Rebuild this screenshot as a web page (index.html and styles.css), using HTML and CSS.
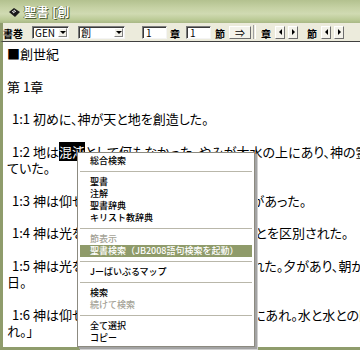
FILE: index.html
```html
<!DOCTYPE html>
<html lang="ja">
<head>
<meta charset="utf-8">
<link rel="stylesheet" href="styles.css">
</head>
<body>
<div class="window">
  <div class="titlebar">
    <svg class="appicon" width="13" height="11" viewBox="0 0 13 11">
      <path d="M1 5 L6 1 L12 5 L7 10 Z" fill="#1a1a1a"/>
      <path d="M4 5 L7 3 M5 6 L8 4" stroke="#e8e8e8" stroke-width="1"/>
    </svg>
    <span class="title">聖書 [創</span>
  </div>
  <div class="toolbar">
    <span class="lbl lbl-book">書巻</span>
    <div class="combo combo-gen"><span class="combo-text">GEN</span><span class="dd"><i class="tri-down"></i></span></div>
    <div class="combo combo-book"><span class="combo-text">創</span><span class="dd"><i class="tri-down"></i></span></div>
    <div class="field field-ch">1</div>
    <span class="lbl lbl-ch">章</span>
    <div class="field field-vs">1</div>
    <span class="lbl lbl-vs">節</span>
    <div class="btn btn-go">⇒</div>
    <span class="tsep"></span>
    <span class="lbl lbl-ch2">章</span>
    <div class="btn arr arr-first"><i class="tri-left"></i></div>
    <div class="btn arr"><i class="tri-right"></i></div>
    <span class="lbl lbl-vs2">節</span>
    <div class="btn arr arr-first"><i class="tri-left"></i></div>
    <div class="btn arr"><i class="tri-right"></i></div>
  </div>
  <div class="content">
    <div class="para"><div class="line">■創世紀</div></div>
    <div class="para"><div class="line">第 1章</div></div>
    <div class="para"><div class="line verse">1:1 初めに、神が天と地を創造した。</div></div>
    <div class="para">
      <div class="line verse">1:2 地は<span class="hl">混沌</span>として何もなかった。やみが大水の上にあり、神の霊が水の上を動い</div>
      <div class="line">ていた。</div>
    </div>
    <div class="para"><div class="line verse">1:3 神は仰せられた。「光よ、あれ。」すると光があった。</div></div>
    <div class="para"><div class="line verse">1:4 神は光を見て、良しとした。神は光とやみとを区別された。</div></div>
    <div class="para">
      <div class="line verse">1:5 神は光を昼と呼び、やみを夜と名づけられた。夕があり、朝があった。第一</div>
      <div class="line">日。</div>
    </div>
    <div class="para">
      <div class="line verse">1:6 神は仰せられた。「大空よ。水のまんなかにあれ。水と水との間に区別があ</div>
      <div class="line">れ。」</div>
    </div>
  </div>
  <div class="menu">
    <div class="mi">総合検索</div>
    <div class="msep"></div>
    <div class="mi">聖書</div>
    <div class="mi">注解</div>
    <div class="mi">聖書辞典</div>
    <div class="mi">キリスト教辞典</div>
    <div class="msep"></div>
    <div class="mi dis">節表示</div>
    <div class="mi sel">聖書検索（JB2008語句検索を起動）</div>
    <div class="msep"></div>
    <div class="mi">Jーばいぶるマップ</div>
    <div class="msep"></div>
    <div class="mi">検索</div>
    <div class="mi dis">続けて検索</div>
    <div class="msep"></div>
    <div class="mi">全て選択</div>
    <div class="mi">コピー</div>
  </div>
</div>
</body>
</html>
```
FILE: styles.css
```css
html, body {
  margin: 0;
  padding: 0;
  width: 360px;
  height: 350px;
  overflow: hidden;
  background: #ffffff;
}

.window {
  position: relative;
  width: 360px;
  height: 350px;
  display: flex;
  flex-direction: column;
  overflow: hidden;
  font-family: "Noto Sans CJK JP", "Noto Sans", sans-serif;
}

.titlebar {
  height: 23px;
  flex: none;
  display: flex;
  align-items: center;
  padding-left: 8px;
  background: linear-gradient(#b3c18f 0%, #c6d2a5 35%, #d0dab2 60%, #bccb97 85%, #a9b886 100%);
}

.appicon {
  margin-top: 1px;
}

.title {
  margin-left: 3px;
  font-size: 12px;
  font-weight: bold;
  color: #ffffff;
  text-shadow: 1px 1px 0 #4e5c33, -1px 0 0 #6f7d4f;
  letter-spacing: 0.5px;
}

.toolbar {
  height: 18px;
  flex: none;
  display: flex;
  align-items: center;
  background: #ecebdc;
  border-left: 3px solid #8f9c6c;
  font-size: 10px;
  color: #000;
}

.lbl {
  font-size: 10px;
  font-weight: bold;
  line-height: 12px;
  margin-top: 3px;
}

.lbl-book { margin-left: 0; }

.combo {
  height: 13px;
  box-sizing: border-box;
  background: #fff;
  border-style: solid;
  border-width: 1px;
  border-color: #7b7b7b #f4f4f4 #f4f4f4 #7b7b7b;
  box-shadow: inset 1px 1px 0 #3a3a3a;
  display: flex;
  align-items: center;
  justify-content: space-between;
  font-size: 10px;
}

.combo-gen { width: 37px; margin-left: 9px; }
.combo-book { width: 47px; margin-left: 9px; }

.combo-text {
  padding-left: 2px;
  line-height: 11px;
}

.dd {
  width: 9px;
  height: 9px;
  margin-right: 1px;
  background: #f2f1ea;
  border: 1px solid;
  border-color: #fff #808080 #808080 #fff;
  display: flex;
  align-items: center;
  justify-content: center;
  box-sizing: border-box;
}

.tri-down {
  width: 0;
  height: 0;
  border-left: 3px solid transparent;
  border-right: 3px solid transparent;
  border-top: 3px solid #000;
}

.field {
  width: 25px;
  height: 13px;
  box-sizing: border-box;
  background: #fff;
  border-style: solid;
  border-width: 1px;
  border-color: #7b7b7b #f4f4f4 #f4f4f4 #7b7b7b;
  box-shadow: inset 1px 1px 0 #3a3a3a;
  font-size: 10px;
  line-height: 11px;
  padding-left: 3px;
}

.field-ch { margin-left: 17px; }
.lbl-ch { margin-left: 3px; }
.field-vs { margin-left: 6px; }
.lbl-vs { margin-left: 4px; }

.btn {
  height: 13px;
  box-sizing: border-box;
  background: #f3f2ea;
  border: 1px solid;
  border-color: #ffffff #6e6e6e #6e6e6e #ffffff;
  display: flex;
  align-items: center;
  justify-content: center;
}

.btn-go {
  width: 22px;
  margin-left: 4px;
  font-size: 10px;
  line-height: 11px;
}

.tsep {
  width: 1px;
  height: 14px;
  margin-left: 2px;
  border-left: 1px solid #a0a0a0;
  border-right: 1px solid #fff;
}

.lbl-ch2 { margin-left: 5px; }
.lbl-vs2 { margin-left: 9px; }

.arr {
  width: 10px;
  margin-left: 3px;
}

.arr-first { margin-left: 4px; }

.tri-left {
  width: 0;
  height: 0;
  border-top: 3px solid transparent;
  border-bottom: 3px solid transparent;
  border-right: 3px solid #000;
}

.tri-right {
  width: 0;
  height: 0;
  border-top: 3px solid transparent;
  border-bottom: 3px solid transparent;
  border-left: 3px solid #000;
}

.content {
  flex: 1;
  min-height: 0;
  overflow: hidden;
  background: #fff;
  border-left: 3px solid #8f9c6c;
  border-top: 1px solid #404040;
  border-bottom: 3px solid #8f9c6c;
  padding: 4px 0 0 4px;
  font-size: 13px;
  font-feature-settings: "palt";
  color: #000;
}

.para {
  margin-bottom: 16.3px;
}

.line {
  height: 16.3px;
  line-height: 16.3px;
  white-space: nowrap;
}

.verse {
  padding-left: 5px;
}

.hl {
  background: #000;
  color: #fff;
}

.menu {
  position: absolute;
  left: 77px;
  top: 152px;
  width: 178px;
  box-sizing: border-box;
  background: #fff;
  border: 1px solid #8c8a80;
  padding: 2px 0;
  box-shadow: 2px 2px 0 #a3a3a3, 3px 3px 0 #d0d0d0;
  font-size: 9px;
  font-weight: 500;
  color: #000;
}

.mi {
  height: 12px;
  line-height: 12px;
  padding-left: 10px;
  margin: 0 2px;
  white-space: nowrap;
}

.mi.dis {
  color: #a5a397;
}

.mi.sel {
  background: #8f9b6a;
  color: #fff;
}

.msep {
  height: 9px;
  margin: 0 2px;
  display: flex;
  align-items: center;
}

.msep::before {
  content: "";
  flex: 1;
  height: 1px;
  background: #b9b7aa;
}
```
